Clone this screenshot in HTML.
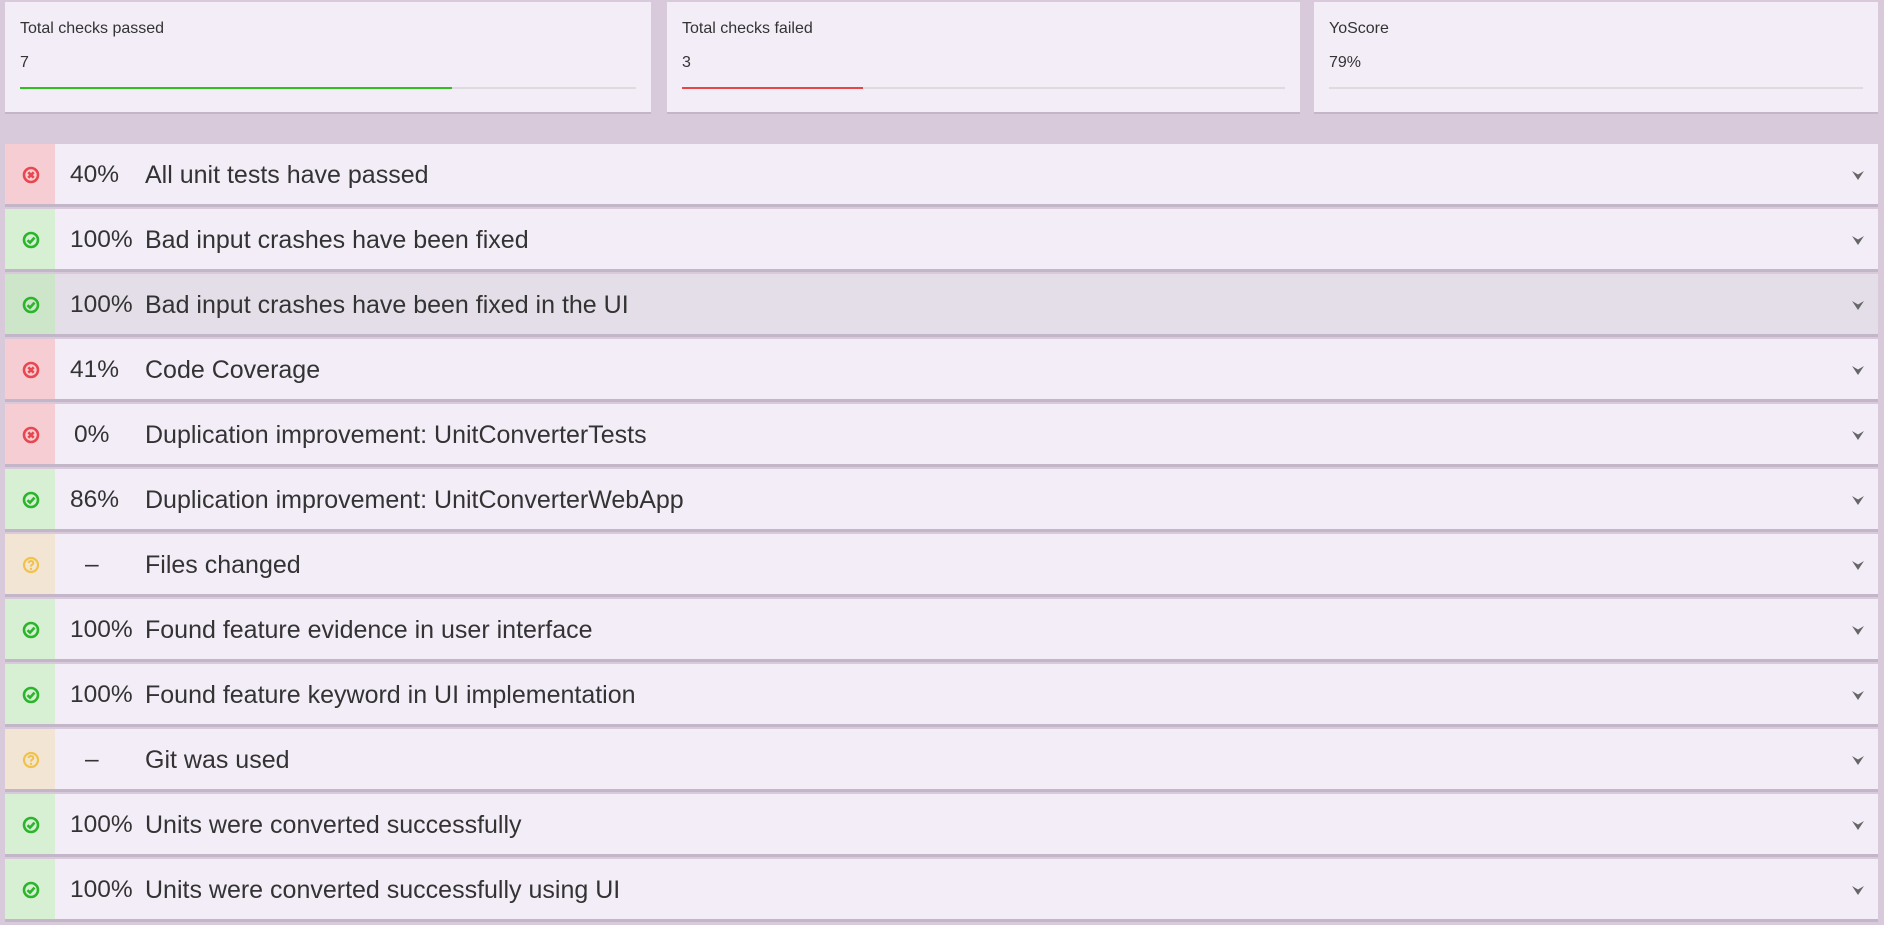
<!DOCTYPE html>
<html><head><meta charset="utf-8"><style>
*{box-sizing:border-box;margin:0;padding:0}
body{width:1884px;height:925px;background:#d8cadb;font-family:"Liberation Sans",Arial,sans-serif;color:#333;position:relative;overflow:hidden}
.card{position:absolute;top:2px;height:110px;background:#f3edf8;box-shadow:0 2px 0 #c3b6c8}
.card .t{position:absolute;left:15px;top:18px;font-size:16px;color:#333}
.card .v{position:absolute;left:15px;top:52px;font-size:16px;color:#333}
.card .bar{position:absolute;left:15px;right:15px;top:85px;height:2px;background:#dedbe0}
.card .fill{position:absolute;left:0;top:0;height:2px}
.row{position:absolute;left:5px;width:1873px;height:60px;background:#f3edf8;box-shadow:0 3px 0 #c3b6c8}
.row.h{background:#e4dee8}
.ic{position:absolute;left:0;top:0;width:50px;height:60px}
.ic svg{position:absolute;left:17px;top:22px}
.red .ic{background:#f5cdd3}.grn .ic{background:#d7f0d4}.yel .ic{background:#f3e5d3}
.h.grn .ic{background:#cde5c9}
.p{position:absolute;top:17px;font-size:24.5px;line-height:28px}
.n{position:absolute;left:140px;top:17px;font-size:25px;line-height:28px}
.ch{position:absolute;right:14px;top:27px}
</style></head><body>
<div class="card" style="left:5px;width:646px"><div class="t">Total checks passed</div><div class="v">7</div><div class="bar"><div class="fill" style="width:432px;background:#2fbf1f"></div></div></div>
<div class="card" style="left:667px;width:633px"><div class="t">Total checks failed</div><div class="v">3</div><div class="bar"><div class="fill" style="width:181px;background:#e84545"></div></div></div>
<div class="card" style="left:1314px;width:564px"><div class="t">YoScore</div><div class="v">79%</div><div class="bar"></div></div>

<svg width="0" height="0" style="position:absolute">
<defs>
<g id="x"><circle cx="9" cy="9" r="7" fill="none" stroke="#e8474f" stroke-width="2.6"/><path d="M6.3 6.3L11.7 11.7M11.7 6.3L6.3 11.7" stroke="#e8474f" stroke-width="2.6"/></g>
<g id="c"><circle cx="9" cy="9" r="7" fill="none" stroke="#2bb52b" stroke-width="2.6"/><path d="M5.5 9.2L8 11.6L12.5 6.6" fill="none" stroke="#2bb52b" stroke-width="2.6"/></g>
<g id="q"><circle cx="9" cy="9" r="7" fill="none" stroke="#f0c24a" stroke-width="2.2"/><path d="M6.6 7.1Q6.7 5 9 5Q11.3 5 11.3 7Q11.3 8.2 9.7 8.9Q9 9.3 9 10.6" fill="none" stroke="#f0c24a" stroke-width="2"/><circle cx="9" cy="12.9" r="1.2" fill="#f0c24a"/></g>
<g id="v"><path d="M0 0L6 9L12 0L6 3.5Z" fill="#666"/></g>
</defs></svg>

<div class="row red" style="top:144px"><div class="ic"><svg width="18" height="18"><use href="#x"/></svg></div><div class="p" style="left:65px">40%</div><div class="n">All unit tests have passed</div><svg class="ch" width="12" height="9"><use href="#v"/></svg></div>
<div class="row grn" style="top:209px"><div class="ic"><svg width="18" height="18"><use href="#c"/></svg></div><div class="p" style="left:65px">100%</div><div class="n">Bad input crashes have been fixed</div><svg class="ch" width="12" height="9"><use href="#v"/></svg></div>
<div class="row grn h" style="top:274px"><div class="ic"><svg width="18" height="18"><use href="#c"/></svg></div><div class="p" style="left:65px">100%</div><div class="n">Bad input crashes have been fixed in the UI</div><svg class="ch" width="12" height="9"><use href="#v"/></svg></div>
<div class="row red" style="top:339px"><div class="ic"><svg width="18" height="18"><use href="#x"/></svg></div><div class="p" style="left:65px">41%</div><div class="n">Code Coverage</div><svg class="ch" width="12" height="9"><use href="#v"/></svg></div>
<div class="row red" style="top:404px"><div class="ic"><svg width="18" height="18"><use href="#x"/></svg></div><div class="p" style="left:69px">0%</div><div class="n">Duplication improvement: UnitConverterTests</div><svg class="ch" width="12" height="9"><use href="#v"/></svg></div>
<div class="row grn" style="top:469px"><div class="ic"><svg width="18" height="18"><use href="#c"/></svg></div><div class="p" style="left:65px">86%</div><div class="n">Duplication improvement: UnitConverterWebApp</div><svg class="ch" width="12" height="9"><use href="#v"/></svg></div>
<div class="row yel" style="top:534px"><div class="ic"><svg width="18" height="18"><use href="#q"/></svg></div><div class="p" style="left:80px">–</div><div class="n">Files changed</div><svg class="ch" width="12" height="9"><use href="#v"/></svg></div>
<div class="row grn" style="top:599px"><div class="ic"><svg width="18" height="18"><use href="#c"/></svg></div><div class="p" style="left:65px">100%</div><div class="n">Found feature evidence in user interface</div><svg class="ch" width="12" height="9"><use href="#v"/></svg></div>
<div class="row grn" style="top:664px"><div class="ic"><svg width="18" height="18"><use href="#c"/></svg></div><div class="p" style="left:65px">100%</div><div class="n">Found feature keyword in UI implementation</div><svg class="ch" width="12" height="9"><use href="#v"/></svg></div>
<div class="row yel" style="top:729px"><div class="ic"><svg width="18" height="18"><use href="#q"/></svg></div><div class="p" style="left:80px">–</div><div class="n">Git was used</div><svg class="ch" width="12" height="9"><use href="#v"/></svg></div>
<div class="row grn" style="top:794px"><div class="ic"><svg width="18" height="18"><use href="#c"/></svg></div><div class="p" style="left:65px">100%</div><div class="n">Units were converted successfully</div><svg class="ch" width="12" height="9"><use href="#v"/></svg></div>
<div class="row grn" style="top:859px"><div class="ic"><svg width="18" height="18"><use href="#c"/></svg></div><div class="p" style="left:65px">100%</div><div class="n">Units were converted successfully using UI</div><svg class="ch" width="12" height="9"><use href="#v"/></svg></div>
</body></html>
